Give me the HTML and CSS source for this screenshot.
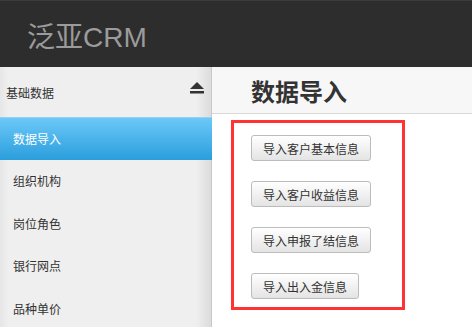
FILE: index.html
```html
<!DOCTYPE html>
<html lang="zh-CN">
<head>
  <meta charset="UTF-8" />
  <meta name="viewport" content="width=device-width, initial-scale=1.0"/>
  <title>泛亚CRM</title>
  <link rel="stylesheet" href="styles.css">
</head>
<body>
  <!-- Top bar -->
  <div class="topbar">
    <span class="brand">泛亚CRM</span>
  </div>

  <div class="layout">
    <!-- Side menu -->
    <div class="sidebar">
      <div class="side-head">
        <span>基础数据</span>
        <svg class="eject" width="14" height="12" viewBox="0 0 14 12">
          <polygon points="7,0 14,7 0,7" fill="#333"/>
          <rect x="0" y="9" width="14" height="2.5" fill="#333"/>
        </svg>
      </div>
      <div class="side-item active">数据导入</div>
      <div class="side-item">组织机构</div>
      <div class="side-item">岗位角色</div>
      <div class="side-item">银行网点</div>
      <div class="side-item">品种单价</div>
    </div>

    <!-- Content -->
    <div class="main">
      <div class="page-title">数据导入</div>
      <div class="import-box">
        <button class="btn">导入客户基本信息</button>
        <button class="btn">导入客户收益信息</button>
        <button class="btn">导入申报了结信息</button>
        <button class="btn">导入出入金信息</button>
      </div>
    </div>
  </div>
</body>
</html>
```

FILE: styles.css
```css
* {
  box-sizing: border-box;
}

html, body {
  height: 100%;
}

body {
  margin: 0;
  font-family: "Liberation Sans", "Noto Sans CJK SC", sans-serif;
  color: #333;
  background: #fff;
  display: flex;
  flex-direction: column;
  overflow: hidden;
}

.topbar {
  flex-shrink: 0;
  height: 67px;
  background: #2d2d2d;
  border-top: 1px solid #3c3c3c;
  padding-left: 27px;
  display: flex;
  align-items: center;
}

.brand {
  font-family: "Liberation Sans", "Noto Sans CJK SC", sans-serif;
  font-size: 28px;
  color: #9b9b9b;
  margin-top: 1px;
}

.layout {
  flex: 1;
  display: flex;
  min-height: 0;
}

.sidebar {
  width: 212px;
  flex-shrink: 0;
  background: linear-gradient(to right, #e6e6e6 0, #efefef 8px, #efefef 196px, #dcdcdc 211px);
  border-right: 1px solid #c8c8c8;
}

.side-head {
  height: 50px;
  padding: 0 7px 0 6px;
  font-size: 12px;
  display: flex;
  align-items: center;
  justify-content: space-between;
}

.eject {
  margin-top: -8px;
}

.side-item {
  height: 42.5px;
  padding-left: 13px;
  font-size: 12px;
  display: flex;
  align-items: center;
}

.side-item.active {
  color: #fff;
  margin-right: -1px;
  border-top: 1px solid #8ad4fb;
  background: linear-gradient(#6cc8f8, #2a9edc);
}

.main {
  flex: 1;
}

.page-title {
  height: 47px;
  padding-left: 39px;
  background: #f7f7f7;
  border-bottom: 1px solid #d8d8d8;
  font-size: 24px;
  font-weight: bold;
  color: #333;
  display: flex;
  align-items: center;
}

.import-box {
  width: 174px;
  height: 190px;
  margin: 6px 0 0 19px;
  border: 3px solid #f33;
  padding: 12px 0 0 17px;
  display: flex;
  flex-direction: column;
  align-items: flex-start;
  gap: 20px;
}

.btn {
  flex-shrink: 0;
  height: 26px;
  padding: 0 11px;
  font-family: "Liberation Sans", "Noto Sans CJK SC", sans-serif;
  font-size: 12px;
  color: #333;
  border: 1px solid #bcbcbc;
  border-radius: 3px;
  background: linear-gradient(#ffffff, #e4e4e4);
}
```
